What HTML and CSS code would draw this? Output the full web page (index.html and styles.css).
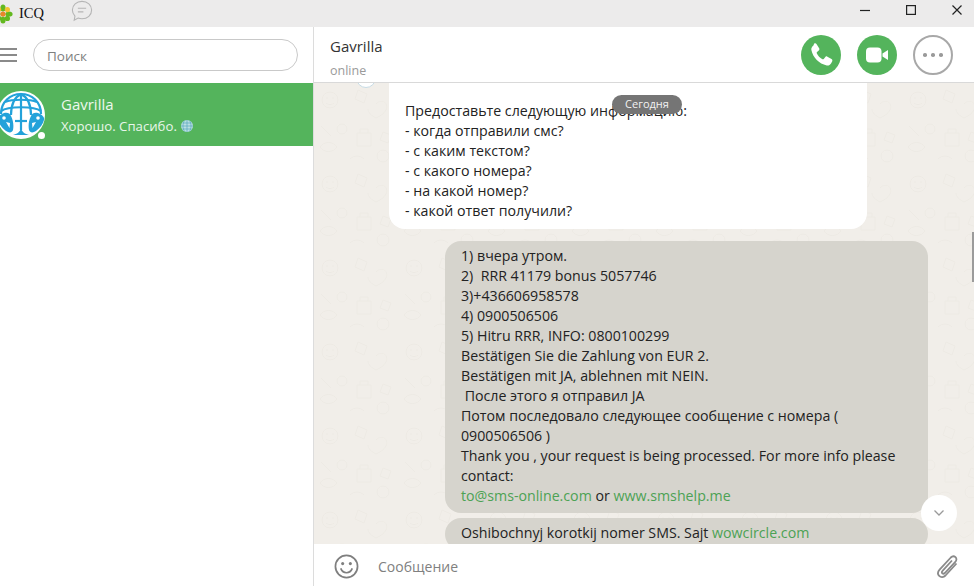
FILE: index.html
```html
<!DOCTYPE html>
<html lang="ru">
<head>
<meta charset="utf-8">
<title>ICQ</title>
<link rel="stylesheet" href="styles.css">
</head>
<body>
<div class="app">
  <header class="titlebar">
    <div class="brand">
      <svg class="flower" viewBox="0 0 20 20" width="20" height="20"><g fill="#63b81f"><ellipse cx="10" cy="4" rx="2.600" ry="3.600"/><ellipse cx="10" cy="16" rx="2.600" ry="3.600"/><ellipse cx="4" cy="10" rx="3.600" ry="2.600"/><ellipse cx="16" cy="10" rx="3.600" ry="2.600"/><circle cx="14.400" cy="14.400" r="2.600"/><circle cx="5.600" cy="14.400" r="2.600"/></g><g fill="#f4c430"><circle cx="14.400" cy="5.600" r="2.600"/><circle cx="5.600" cy="5.600" r="2.600"/></g><circle cx="10" cy="10" r="2.600" fill="#e9862a"/></svg>
      <span class="brand-name">ICQ</span>
      <svg class="bubble-icon" viewBox="0 0 24 24" width="22" height="22" fill="none" stroke="#b5b5b5" stroke-width="1.200"><path d="M12 1.500c6 0 10.500 4 10.500 9.500s-4.500 9.500-10.500 9.500c-1.500 0-3-.3-4.300-.8L3.500 22l.8-4.300C2.500 15.800 1.500 13.500 1.500 11 1.500 5.500 6 1.500 12 1.500z"/><path d="M7.500 9h9M7.500 13h6"/></svg>
    </div>
    <div class="winctl">
      <svg viewBox="0 0 10 10" width="10" height="10"><path d="M0 5.500h10" stroke="#222" stroke-width="1.200"/></svg>
      <svg viewBox="0 0 10 10" width="10" height="10"><rect x=".6" y=".6" width="8.800" height="8.800" fill="none" stroke="#222" stroke-width="1.200"/></svg>
      <svg viewBox="0 0 10 10" width="10" height="10"><path d="M.5.500l9 9M9.500.500l-9 9" stroke="#222" stroke-width="1.200"/></svg>
    </div>
  </header>
  <div class="main">
    <aside class="sidebar">
      <div class="search-row">
        <div class="burger"><i></i><i></i><i></i></div>
        <div class="search">Поиск</div>
      </div>
      <div class="contact">
        <div class="avatar">
          <svg viewBox="0 0 48 48" width="48" height="48">
            <circle cx="24" cy="24" r="24" fill="#fff"/>
            <g fill="none" stroke="#23a2da" stroke-width="2.200">
              <path d="M4 23C4 11 13 3 24 3s20 8 20 20"/>
              <path d="M24 3v36M14 24C14 12 18 6 24 3c6 3 10 9 10 21"/>
              <path d="M4 20c7-5 33-5 40 0M8 11c7-3 25-3 32 0"/>
              <path d="M18 30h12"/>
            </g>
            <path fill="#23a2da" d="M16 44c4-1 7-3 8-7 1 4 4 6 8 7z"/>
            <path fill="#23a2da" d="M7 22c3-1 6 0 7 3 2 4 3 9 2 14-1 3-4 3-7 1-4-3-7-7-8-11-1-3 3-6 6-7zM41 22c-3-1-6 0-7 3-2 4-3 9-2 14 1 3 4 3 7 1 4-3 7-7 8-11 1-3-3-6-6-7z"/>
            <g fill="#fff"><circle cx="7" cy="27" r="1.800"/><circle cx="41" cy="27" r="1.800"/><path d="M9 31l4 1-.5 5zM39 31l-4 1 .5 5z"/></g>
          </svg>
          <span class="presence"></span>
        </div>
        <div class="contact-text">
          <div class="contact-name">Gavrilla</div>
          <div class="contact-last">Хорошо. Спасибо. <svg class="mini-globe" viewBox="0 0 12 12" width="12" height="12"><circle cx="6" cy="6" r="6" fill="#b9dfe3"/><path d="M0 6h12M6 0v12M1.500 3h9M1.500 9h9M3.500 .6c-2 3-2 8 0 10.800M8.500 .6c2 3 2 8 0 10.800" stroke="#5aa7bd" stroke-width=".7" fill="none"/></svg></div>
        </div>
      </div>
    </aside>
    <section class="chat">
      <div class="chat-head">
        <div class="peer">
          <div class="peer-name">Gavrilla</div>
          <div class="peer-status">online</div>
        </div>
        <div class="actions">
          <button class="round green" aria-label="Позвонить"><svg viewBox="0 0 24 24" width="30" height="30"><path fill="#fff" d="M6.600 2.800c.7-.4 1.500-.2 1.900.5l2 3.300c.4.600.2 1.400-.3 1.800L8.800 9.500c-.3.300-.4.700-.2 1.100.9 2 2.500 3.700 4.500 4.700.4.200.8.100 1.100-.2l1.100-1.400c.4-.6 1.200-.8 1.800-.4l3.300 1.900c.7.400.9 1.300.5 2l-.9 1.500c-.7 1.200-2 1.900-3.400 1.600-6.200-1.300-11-6.100-12.300-12.300-.3-1.400.4-2.700 1.500-3.500z"/></svg></button>
          <button class="round green" aria-label="Видео"><svg viewBox="0 0 24 24" width="24" height="24"><rect x="1" y="4.500" width="15.500" height="15" rx="4" fill="#fff"/><path fill="#fff" d="M17.500 10.500l5.500-3.500v10l-5.500-3.500z"/></svg></button>
          <button class="round outline" aria-label="Ещё"><i></i><i></i><i></i></button>
        </div>
      </div>
      <div class="thread">
        <div class="day">Сегодня</div>
        <div class="messages">
          <div class="peer-avatar"></div>
          <article class="msg incoming">Предоставьте следующую информацию:<br>- когда отправили смс?<br>- с каким текстом?<br>- с какого номера?<br>- на какой номер?<br>- какой ответ получили?</article>
          <article class="msg outgoing">1) вчера утром.<br>2)&nbsp; RRR 41179 bonus 5057746<br>3)+436606958578<br>4) 0900506506<br>5) Hitru RRR, INFO: 0800100299<br>Bestätigen Sie die Zahlung von EUR 2.<br>Bestätigen mit JA, ablehnen mit NEIN.<br>&nbsp;После этого я отправил JA<br>Потом последовало следующее сообщение с номера ( 0900506506 )<br>Thank you , your request is being processed. For more info please contact:<br><a>to@sms-online.com</a> or <a>www.smshelp.me</a></article>
          <article class="msg outgoing next">Oshibochnyj korotkij nomer SMS. Sajt <a>wowcircle.com</a></article>
        </div>
        <div class="scrollthumb"></div>
        <button class="down" aria-label="Вниз"><svg viewBox="0 0 12 8" width="12" height="8" fill="none" stroke="#9a9a9a" stroke-width="1.300"><path d="M1.500 1.500L6 6l4.500-4.500"/></svg></button>
      </div>
      <footer class="composer">
        <svg viewBox="0 0 26 26" width="25" height="25" fill="none" stroke="#7f7f7f" stroke-width="1.800"><circle cx="13" cy="13" r="11.500"/><circle cx="9" cy="10" r="1.600" fill="#7f7f7f" stroke="none"/><circle cx="17" cy="10" r="1.600" fill="#7f7f7f" stroke="none"/><path d="M7 15c1.200 3 3.400 4.500 6 4.500s4.800-1.500 6-4.500"/></svg>
        <div class="placeholder">Сообщение</div>
        <svg viewBox="0 0 26 26" width="26" height="26" fill="none" stroke="#8a8a8a" stroke-width="1.800"><path d="M21.500 9.500L10.500 21.500c-2 2-4.700 2-6.300.4s-1.400-4.200.4-6.200L15.800 3.500c1.400-1.400 3.400-1.500 4.700-.3s1.200 3.200-.2 4.600L9.800 19c-.8.800-1.800.9-2.500.3s-.6-1.700.2-2.500L17 6.500"/></svg>
      </footer>
    </section>
  </div>
</div>
</body>
</html>
```
FILE: styles.css
```css
* { box-sizing: border-box; }
html, body { margin: 0; height: 100%; overflow: hidden; }
body { font-family: "Open Sans", "Noto Sans", sans-serif; color: #222; background: #fff; }
.app { width: 974px; height: 586px; display: flex; flex-direction: column; }
.titlebar { height: 27px; flex: none; background: #ecebeb; display: flex; justify-content: space-between; align-items: center; }
.brand { display: flex; align-items: center; margin-left: -7px; }
.brand-name { font-family: "Liberation Serif", serif; font-size: 14.500px; font-weight: 500; margin-left: 6px; color: #111; }
.bubble-icon { margin-left: 27px; margin-top: -5px; }
.winctl { display: flex; gap: 36px; margin-right: 12px; margin-top: -8px; }
.main { flex: 1; display: flex; min-height: 0; }
.sidebar { width: 314px; flex: none; background: #fff; border-right: 1px solid #dcdcdc; }
.search-row { height: 56px; display: flex; align-items: center; padding-right: 15px; }
.burger { width: 17px; margin-right: 16px; display: flex; flex-direction: column; gap: 4px; }
.burger i { display: block; height: 2px; background: #8a8a8a; }
.search { flex: 1; height: 32px; border: 1px solid #c9c9c9; border-radius: 16px; padding-left: 13px; font-size: 13.500px; line-height: 32px; color: #808080; }
.contact { height: 63px; background: #54b45c; display: flex; align-items: center; color: #fff; }
.avatar { width: 48px; height: 48px; margin-left: -3px; position: relative; flex: none; }
.avatar svg { display: block; }
.presence { position: absolute; right: 0; bottom: 0; width: 7px; height: 7px; border-radius: 50%; background: #fff; }
.contact-text { margin-left: 16px; }
.contact-name { font-size: 15px; line-height: 20px; color: #eef8ee; }
.contact-last { font-size: 13.200px; line-height: 20px; margin-top: 2px; color: #e9f6ea; display: flex; align-items: center; gap: 4px; }
.chat { flex: 1; min-width: 0; display: flex; flex-direction: column; }
.chat-head { height: 56px; flex: none; display: flex; justify-content: space-between; border-bottom: 1px solid #d9d9d9; background: #fff; }
.peer { padding: 8px 0 0 16px; }
.peer-name { font-size: 15px; line-height: 22px; color: #333; }
.peer-status { font-size: 12.500px; line-height: 18px; margin-top: 5px; color: #9a9a9a; }
.actions { display: flex; gap: 16px; padding: 8px 21px 0 0; }
.round { width: 40px; height: 40px; border-radius: 50%; padding: 0; border: 0; display: flex; align-items: center; justify-content: center; }
.green { background: #54b45c; }
.outline { background: #fff; border: 2px solid #a8a8a8; gap: 4.500px; }
.outline i { width: 3.500px; height: 3.500px; border-radius: 50%; background: #9a9a9a; }
.thread { flex: 1; min-height: 0; position: relative; overflow: hidden; background-color: #f1eee9; background-image: url("data:image/svg+xml,%3Csvg xmlns='http://www.w3.org/2000/svg' width='84' height='84' fill='none' stroke='%23edeae4' stroke-width='1'%3E%3Ccircle cx='16' cy='17' r='8'/%3E%3Cpath d='M12 15h2M18 15h2M12 20c2 2 6 2 8 0'/%3E%3Cpath d='M44 7l9 4-3 9-9-4zM62 21c6-6 13-1 10 6-2 4-6 6-10 8-4-2-8-5-8-9'/%3E%3Ccircle cx='28' cy='46' r='5'/%3E%3Cpath d='M7 43l10 10M6 64c4-6 13-6 17 0-4 6-13 6-17 0z'/%3E%3Cpath d='M43 50h14v13H43zM46 50v-4h8v4'/%3E%3Cpath d='M69 49l8 3-3 8-8-3zM36 76c4-4 10-4 14 0M63 73a6 6 0 1 0 12 0a6 6 0 1 0-12 0'/%3E%3C/svg%3E"); }
.messages { display: flex; flex-direction: column; height: 100%; overflow: hidden; }
.peer-avatar { position: absolute; left: 42px; top: -15px; width: 20px; height: 20px; border-radius: 50%; background: #fff; border: 1px solid #c7dce6; }
.msg { font-size: 14.200px; line-height: 20px; color: #222; flex: none; }
.msg a { color: #4ca254; }
.incoming { background: #fff; margin-left: 75px; width: 478px; padding: 18px 16px 8px; border-radius: 0 0 16px 16px; }
.outgoing { background: #d6d4cd; margin-left: 131px; width: 483px; padding: 5px 16px 7px; border-radius: 16px; margin-top: 12px; }
.next { margin-top: 5px; }
.day { position: absolute; left: 298px; top: 12px; width: 70px; height: 19px; border-radius: 10px; background: #757575; color: #f2f2f2; font-size: 11px; line-height: 18px; text-align: center; z-index: 2; }
.scrollthumb { position: absolute; right: 0; top: 149px; width: 2px; height: 50px; background: #9b9b9b; }
.down { position: absolute; left: 607px; top: 412px; width: 36px; height: 36px; border-radius: 50%; border: 0; padding: 0; background: #fff; display: flex; align-items: center; justify-content: center; }
.composer { height: 42px; flex: none; background: #fff; display: flex; align-items: center; padding: 3px 13px 0 20px; }
.placeholder { flex: 1; margin-left: 19px; font-size: 14px; color: #808080; }
```
